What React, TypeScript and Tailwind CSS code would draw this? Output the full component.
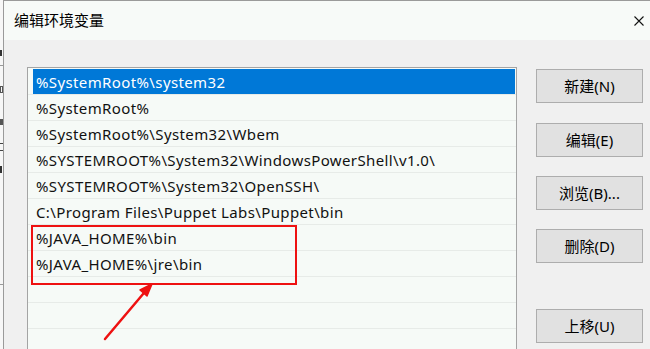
import React from 'react';

const rows = [
  '%SystemRoot%\\system32',
  '%SystemRoot%',
  '%SystemRoot%\\System32\\Wbem',
  '%SYSTEMROOT%\\System32\\WindowsPowerShell\\v1.0\\',
  '%SYSTEMROOT%\\System32\\OpenSSH\\',
  'C:\\Program Files\\Puppet Labs\\Puppet\\bin',
  '%JAVA_HOME%\\bin',
  '%JAVA_HOME%\\jre\\bin',
  '',
  '',
  '',
];

const buttons = [
  { label: '新建(N)', cls: 'mt-[2px]' },
  { label: '编辑(E)', cls: 'mt-[20px]' },
  { label: '浏览(B)...', cls: 'mt-[19px]' },
  { label: '删除(D)', cls: 'mt-[19px]' },
  { label: '上移(U)', cls: 'mt-[46px]' },
];

const font = "font-['Noto_Sans','Noto_Sans_CJK_SC',sans-serif]";

export default function App() {
  return (
    <div className={`w-[650px] h-[349px] overflow-hidden flex bg-[#f4f4f4] ${font}`}>
      {/* sliver of the window behind */}
      <div className="w-[3px] shrink-0 bg-[#f7f7f7] flex flex-col">
        <div className="mt-[50px] w-[2px] h-[6px] bg-[#333]" />
        <div className="mt-[9px] w-[3px] h-px bg-[#999]" />
        <div className="mt-[20px] w-[3px] h-[7px] border border-[#555]" />
        <div className="mt-[26px] w-[3px] h-[6px] bg-[#555]" />
        <div className="mt-[18px] w-[3px] h-[8px] border-y border-[#444]" />
        <div className="mt-[15px] w-[2px] h-[7px] bg-[#333]" />
        <div className="mt-[111px] w-[3px] h-px bg-[#999]" />
      </div>

      <div className="flex-1 flex flex-col border-l border-t border-[#9a9a9a] bg-[#f0f0f0]">
        <div className="h-[39px] shrink-0 bg-[#f7faf8] flex items-center justify-between pl-[10px] pr-[4px]">
          <span className="text-[15px] text-black leading-none">编辑环境变量</span>
          <svg width="12" height="12" viewBox="0 0 12 12" className="mr-[1px]">
            <path d="M1.5 1.5L10.5 10.5M10.5 1.5L1.5 10.5" stroke="#111" strokeWidth="1.1" />
          </svg>
        </div>

        <div className="flex-1 flex pt-[27px] pl-[23px] pr-[6px]">
          <div className="relative w-[490px] h-[300px] shrink-0 border border-[#a4a4a4] bg-[#f6faf7] pt-px">
            {rows.map((r, i) => (
              <div key={i} className="h-[26px] border-b border-[#e7ebe8] pl-[5px] pr-px">
                <div
                  className={`h-full flex items-center pl-[3px] pt-px text-[15px] tracking-[0.38px] whitespace-nowrap ${
                    i === 0 ? 'bg-[#0078d7] text-white' : 'text-[#111]'
                  }`}
                >
                  {r}
                </div>
              </div>
            ))}

            {/* annotation drawn over the list */}
            <div className="absolute left-[3px] top-[157px] w-[266px] h-[60px] border-2 border-[#ee1111]" />
            <svg className="absolute left-0 top-0" width="490" height="300" viewBox="0 0 490 300">
              <path d="M77 271L121 219" stroke="#ee1111" strokeWidth="2.5" strokeLinecap="round" />
              <path d="M124 216L112 222L119 228Z" fill="#ee1111" stroke="#ee1111" strokeWidth="1.5" strokeLinejoin="round" />
            </svg>
          </div>

          <div className="flex flex-col ml-[19px]">
            {buttons.map((b) => (
              <div
                key={b.label}
                className={`${b.cls} w-[107px] h-[34px] bg-[#e1e1e1] border border-[#adadad] flex items-center justify-center text-[15px] text-black`}
              >
                {b.label}
              </div>
            ))}
          </div>
        </div>
      </div>
    </div>
  );
}
